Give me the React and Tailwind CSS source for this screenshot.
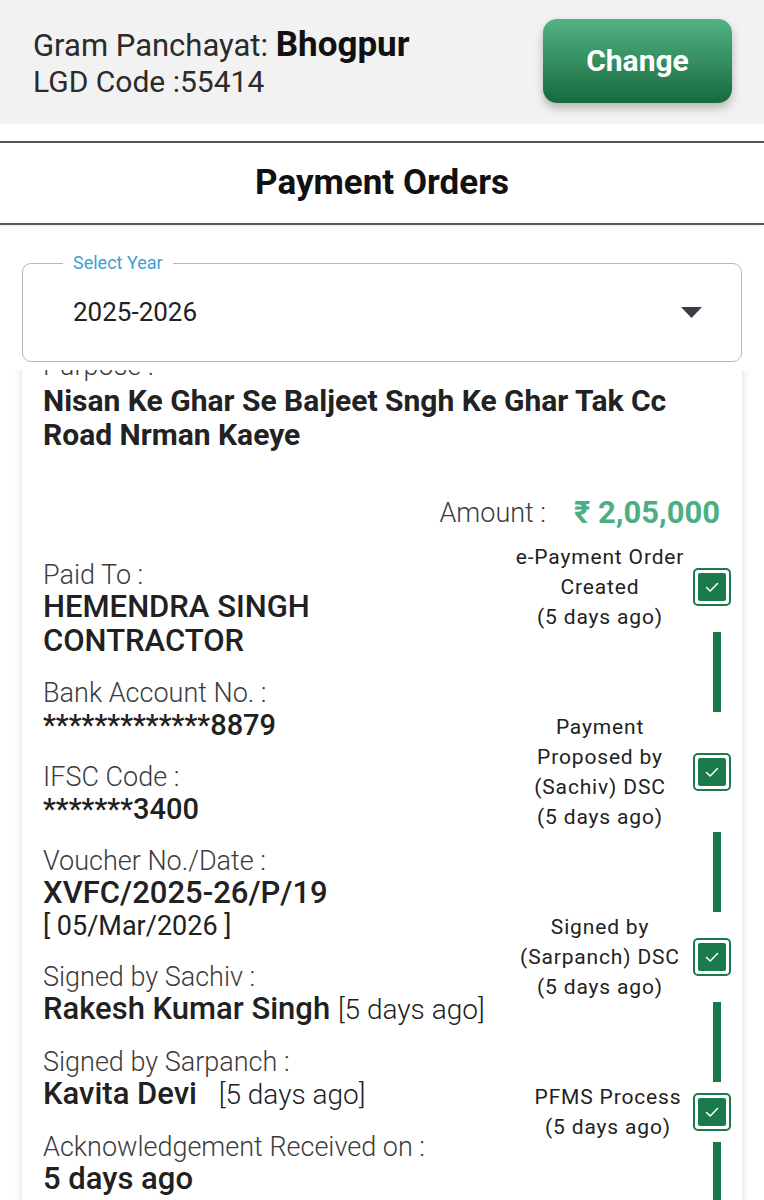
import React from 'react';

const steps = [
  { lines: ['e-Payment Order', 'Created', '(5 days ago)'], shift: '' },
  { lines: ['Payment', 'Proposed by', '(Sachiv) DSC', '(5 days ago)'], shift: '' },
  { lines: ['Signed by', '(Sarpanch) DSC', '(5 days ago)'], shift: '' },
  { lines: ['PFMS Process', '(5 days ago)'], shift: 'pl-4' },
];

function CheckBox() {
  return (
    <div className="w-[38px] h-[38px] shrink-0 rounded-[5px] border-[2.5px] border-[#1a7a4c] bg-white flex items-center justify-center">
      <div className="w-[28px] h-[28px] rounded-[2px] bg-[#1a7a4c] flex items-center justify-center">
        <svg width="18" height="18" viewBox="0 0 18 18" fill="none">
          <path d="M3.5 9.5 L7.2 13 L14.5 5.5" stroke="white" strokeWidth="1.5" strokeLinecap="round" strokeLinejoin="round" />
        </svg>
      </div>
    </div>
  );
}

function Field({ label, children }) {
  return (
    <div className="mt-5 first:mt-0">
      <div className="text-[27px] leading-[30px] font-light text-[#3c3c3c]">{label}</div>
      {children}
    </div>
  );
}

export default function App() {
  return (
    <div className="w-[764px] h-[1200px] overflow-hidden bg-white text-[#212121]" style={{ fontFamily: 'Roboto, "Liberation Sans", sans-serif' }}>
      {/* header */}
      <div className="h-[124px] bg-[#f2f2f2] flex items-center justify-between pl-[33px] pr-[32px]">
        <div className="text-[31px] leading-[36px] text-[#2b2b2b] pt-[2px]">
          <div>Gram Panchayat: <span className="text-[35px] font-bold text-[#111]">Bhogpur</span></div>
          <div className="text-[30px]">LGD Code :55414</div>
        </div>
        <button className="w-[189px] h-[84px] -mt-[3px] rounded-[14px] bg-gradient-to-b from-[#52b484] to-[#156a3d] text-white text-[30px] font-bold shadow-[0_5px_10px_rgba(0,0,0,0.25)]">
          Change
        </button>
      </div>

      {/* title */}
      <div className="mt-[17px] h-[84px] border-y-2 border-[#555] flex items-center justify-center shadow-[0_2px_3px_rgba(0,0,0,0.06)]">
        <h1 className="text-[35px] font-bold text-[#111]">Payment Orders</h1>
      </div>

      {/* year select */}
      <div className="relative mx-[22px] mt-[38px] h-[99px] rounded-[9px] border-[1.5px] border-[#b8b8b8] flex items-center justify-between pl-[50px] pr-[39px]">
        <span className="absolute -top-[13px] left-[40px] bg-white px-[10px] text-[18px] leading-[24px] text-[#3d9fd3]">Select Year</span>
        <span className="text-[26px] text-[#222]">2025-2026</span>
        <svg width="21" height="11" viewBox="0 0 21 11">
          <path d="M0 0 H21 L10.5 11 Z" fill="#3c3c46" />
        </svg>
      </div>

      {/* scrolling card */}
      <div className="mt-[8px] h-[830px] overflow-hidden px-[22px]">
        <div className="bg-white shadow-[0_0_8px_rgba(0,0,0,0.14)] pl-[21px] pr-[11px] pb-10">
          <div className="-mt-[19px] text-[27px] leading-[30px] font-light text-[#3c3c3c]">Purpose :</div>
          <div className="mt-[3px] text-[30px] leading-[34px] font-bold text-[#222]">
            Nisan Ke Ghar Se Baljeet Sngh Ke Ghar Tak Cc Road Nrman Kaeye
          </div>

          <div className="mt-[43px] pr-[11px] flex items-center justify-end h-[36px]">
            <span className="text-[27px] font-light text-[#3c3c3c]">Amount :</span>
            <span className="ml-[28px] text-[31px] font-bold text-[#4caf83]">₹ 2,05,000</span>
          </div>

          <div className="mt-[11px] flex items-start justify-between">
            <div className="pt-[18px]">
              <Field label="Paid To :">
                <div className="text-[31px] leading-[34px] font-medium">HEMENDRA SINGH<br />CONTRACTOR</div>
              </Field>
              <Field label="Bank Account No. :">
                <div className="text-[29px] leading-[34px] font-medium">*************8879</div>
              </Field>
              <Field label="IFSC Code :">
                <div className="text-[29px] leading-[34px] font-medium">*******3400</div>
              </Field>
              <Field label="Voucher No./Date :">
                <div className="text-[31px] leading-[34px] font-medium">XVFC/2025-26/P/19</div>
                <div className="text-[27px] leading-[32px]">[ 05/Mar/2026 ]</div>
              </Field>
              <Field label="Signed by Sachiv :">
                <div className="text-[31px] leading-[34px] font-medium">
                  Rakesh Kumar Singh <span className="text-[28px] font-light">[5 days ago]</span>
                </div>
              </Field>
              <Field label="Signed by Sarpanch :">
                <div className="text-[31px] leading-[34px] font-medium">
                  Kavita Devi <span className="ml-[14px] text-[28px] font-light">[5 days ago]</span>
                </div>
              </Field>
              <Field label="Acknowledgement Received on :">
                <div className="text-[31px] leading-[34px] font-medium">5 days ago</div>
              </Field>
            </div>

            <div className="flex flex-col">
              {steps.map((s, i) => (
                <div key={i}>
                  <div className="flex items-center">
                    <div className={`w-[178px] text-center text-[21px] leading-[30px] tracking-[0.04em] text-[#222] ${s.shift}`}>
                      {s.lines.map((l) => (
                        <div key={l}>{l}</div>
                      ))}
                    </div>
                    <div className="ml-[4px]">
                      <CheckBox />
                    </div>
                  </div>
                  <div className="flex justify-end pr-[10px]">
                    <div className="w-2 h-[80px] bg-[#17784a]" />
                  </div>
                </div>
              ))}
            </div>
          </div>
        </div>
      </div>
    </div>
  );
}
